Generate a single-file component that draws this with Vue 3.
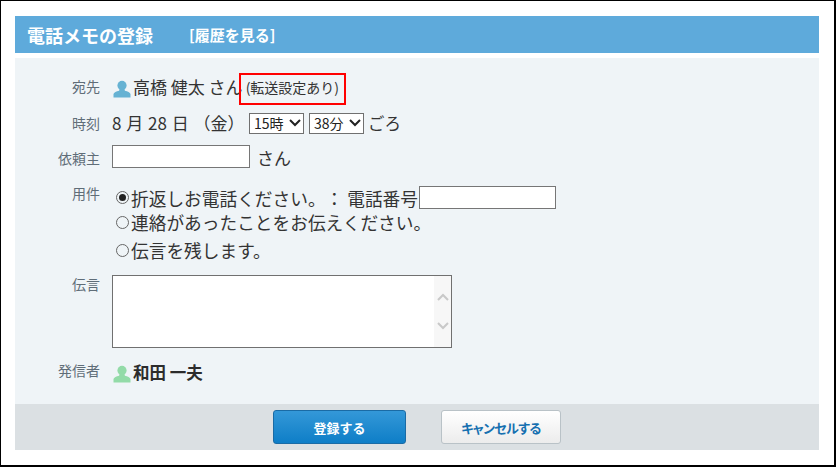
<script setup>
const hours = ['15時']
const minutes = ['38分']
</script>

<template>
  <div class="frame">
    <header class="head">
      <h1 class="title">電話メモの登録</h1>
      <a class="history">[履歴を見る]</a>
    </header>
    <main class="body">
      <div class="row r1">
        <div class="label">宛先</div>
        <div class="value">
          <svg class="user" viewBox="0 0 18 18"><circle cx="9" cy="5.4" r="4.6" fill="#66b2d3"/><path d="M6.5 9h5l.4 1.7c2.8.7 5.2 1.7 5.6 3.3v3.5H.5V14c.4-1.6 2.8-2.6 5.6-3.3z" fill="#66b2d3"/></svg>
          <span class="name">高橋 健太 さん</span>
          <span class="note">(転送設定あり)</span>
          <span class="redbox"></span>
        </div>
      </div>
      <div class="row r2">
        <div class="label">時刻</div>
        <div class="value">
          <span class="date">8 月 28 日 （金）</span>
          <select class="sel"><option v-for="h in hours" :key="h">{{ h }}</option></select>
          <select class="sel"><option v-for="m in minutes" :key="m">{{ m }}</option></select>
          <span class="goro">ごろ</span>
        </div>
      </div>
      <div class="row r3">
        <div class="label">依頼主</div>
        <div class="value">
          <input class="txt client" type="text" />
          <span class="san">さん</span>
        </div>
      </div>
      <div class="row r4">
        <div class="label">用件</div>
        <div class="opts">
          <div class="opt o1"><span class="radio on"></span>折返しお電話ください。： 電話番号<input class="txt phone" type="text" /></div>
          <div class="opt o2"><span class="radio"></span>連絡があったことをお伝えください。</div>
          <div class="opt o3"><span class="radio"></span>伝言を残します。</div>
        </div>
      </div>
      <div class="row r5">
        <div class="label">伝言</div>
        <div class="area">
          <div class="scroll">
            <svg viewBox="0 0 12 8" class="arrow"><path d="M1 7l5-5 5 5" fill="none" stroke="#c9c9c9" stroke-width="2"/></svg>
            <svg viewBox="0 0 12 8" class="arrow"><path d="M1 1l5 5 5-5" fill="none" stroke="#c9c9c9" stroke-width="2"/></svg>
          </div>
        </div>
      </div>
      <div class="row r6">
        <div class="label">発信者</div>
        <div class="value">
          <svg class="user" viewBox="0 0 18 18"><circle cx="9" cy="5.4" r="4.6" fill="#93dba8"/><path d="M6.5 9h5l.4 1.7c2.8.7 5.2 1.7 5.6 3.3v3.5H.5V14c.4-1.6 2.8-2.6 5.6-3.3z" fill="#93dba8"/></svg>
          <strong class="sender">和田 一夫</strong>
        </div>
      </div>
    </main>
    <footer class="foot">
      <button class="btn primary">登録する</button>
      <button class="btn cancel">キャンセルする</button>
    </footer>
  </div>
</template>

<style>
html, body { margin: 0; background: #fff; }
</style>

<style scoped>
.frame {
  box-sizing: border-box;
  width: 836px;
  height: 467px;
  border: 2px solid #000;
  border-left-width: 1px;
  border-top-width: 1px;
  background: #fff;
  padding: 15px 15px 0 14px;
  font-family: "Noto Sans CJK JP", "Liberation Sans", sans-serif;
  color: #333;
  text-spacing-trim: space-all;
}
.head {
  height: 37px;
  background: #5eaadb;
  display: flex;
  align-items: center;
  padding-left: 12px;
  color: #fff;
  font-weight: 700;
  margin-bottom: 5px;
}
.title { margin: 0; font-size: 18px; font-weight: 700; width: 162px; line-height: 20px; }
.history { font-size: 15px; color: #fff; line-height: 20px; }
.body {
  background: #eff4f7;
  height: 346px;
  box-sizing: border-box;
  padding-top: 15px;
}
.row { display: flex; align-items: flex-start; }
.label {
  width: 85px;
  flex: none;
  text-align: right;
  font-size: 14px;
  line-height: 20px;
  color: #5f6d78;
  margin-right: 12px;
}
.value { display: flex; align-items: center; position: relative; font-size: 17px; line-height: 30px; }
.r1 { height: 35px; }
.r1 .label { margin-top: 3px; }
.r2 { height: 36px; }
.r2 .label { margin-top: 5px; }
.r3 { height: 37px; }
.r3 .label { margin-top: 4px; }
.r3 .value { height: 24px; }
.r4 { height: 94px; }
.r4 .label { margin-top: 2px; }
.r5 { height: 83px; }
.r5 .label { margin-top: -1px; }
.r6 .label { margin-top: 2px; }
.user { width: 18px; height: 18px; margin: 2px 2px 0 1px; }
.name { font-size: 17px; line-height: 28px; margin-bottom: 2px; }
.note { font-size: 14px; margin-left: 3px; line-height: 28px; margin-bottom: 2px; }
.redbox {
  position: absolute;
  left: 127px;
  top: 0;
  width: 103px;
  height: 28px;
  border: 2px solid #f00;
}
.date { width: 137px; white-space: pre; word-spacing: 1px; }
.sel {
  box-sizing: border-box;
  appearance: none;
  height: 21px;
  border: 1px solid #707070;
  background: #fff url("data:image/svg+xml,%3Csvg xmlns='http://www.w3.org/2000/svg' width='12' height='8'%3E%3Cpath d='M1 1l5 5 5-5' fill='none' stroke='%23222' stroke-width='2'/%3E%3C/svg%3E") no-repeat right 2px center;
  font-family: inherit;
  font-size: 14px;
  line-height: 19px;
  color: #222;
  padding: 0 0 0 4px;
  margin-right: 5px;
  border-radius: 0;
}
.sel:first-of-type { width: 55px; }
.sel:last-of-type { width: 55px; margin-right: 4px; }
.goro { font-size: 16.5px; }
.txt {
  box-sizing: border-box;
  border: 1px solid #767676;
  background: #fff;
  padding: 0;
  margin: 0;
  border-radius: 0;
  outline: none;
}
.client { width: 138px; height: 23px; }
.san { margin: 4px 0 0 7px; font-size: 17px; }
.opts { font-size: 17.7px; color: #333; margin-top: 5px; }
.opt { display: flex; align-items: center; white-space: pre; }
.o1 { height: 23px; }
.o2 { height: 26px; }
.o3 { height: 30px; }
.radio {
  box-sizing: border-box;
  position: relative;
  width: 13px;
  height: 13px;
  border: 1px solid #666;
  border-radius: 50%;
  margin: 0 2px 0 4px;
  flex: none;
}
.radio.on::after {
  content: "";
  position: absolute;
  inset: 2px;
  border-radius: 50%;
  background: #222;
}
.phone { width: 137px; height: 23px; margin-left: 1px; }
.area {
  box-sizing: border-box;
  width: 340px;
  height: 73px;
  border: 1px solid #707070;
  background: #fff;
  display: flex;
  justify-content: flex-end;
}
.scroll {
  width: 17px;
  background: #f7f7f7;
  display: flex;
  flex-direction: column;
  align-items: center;
  padding-top: 17px;
  gap: 21px;
}
.arrow { width: 12px; height: 8px; }
.sender { font-size: 16.5px; font-weight: 700; color: #2c2c2c; line-height: 28px; margin-bottom: 2px; }
.foot {
  height: 46px;
  background: #dbe0e3;
  display: flex;
  align-items: flex-start;
  padding: 6px 0 0 258px;
  box-sizing: border-box;
  gap: 35px;
}
.btn {
  box-sizing: border-box;
  height: 34px;
  border-radius: 3px;
  font-family: inherit;
  font-size: 13px;
  font-weight: 700;
  padding: 0;
}
.primary {
  width: 133px;
  border: 1px solid #1a6ba5;
  background: linear-gradient(#3498d8, #0e7ec7);
  color: #fff;
}
.cancel {
  width: 120px;
  border: 1px solid #b9c2c7;
  background: linear-gradient(#fff, #ececec);
  color: #1670b0;
  font-feature-settings: "palt";
  letter-spacing: -0.6px;
}
</style>
